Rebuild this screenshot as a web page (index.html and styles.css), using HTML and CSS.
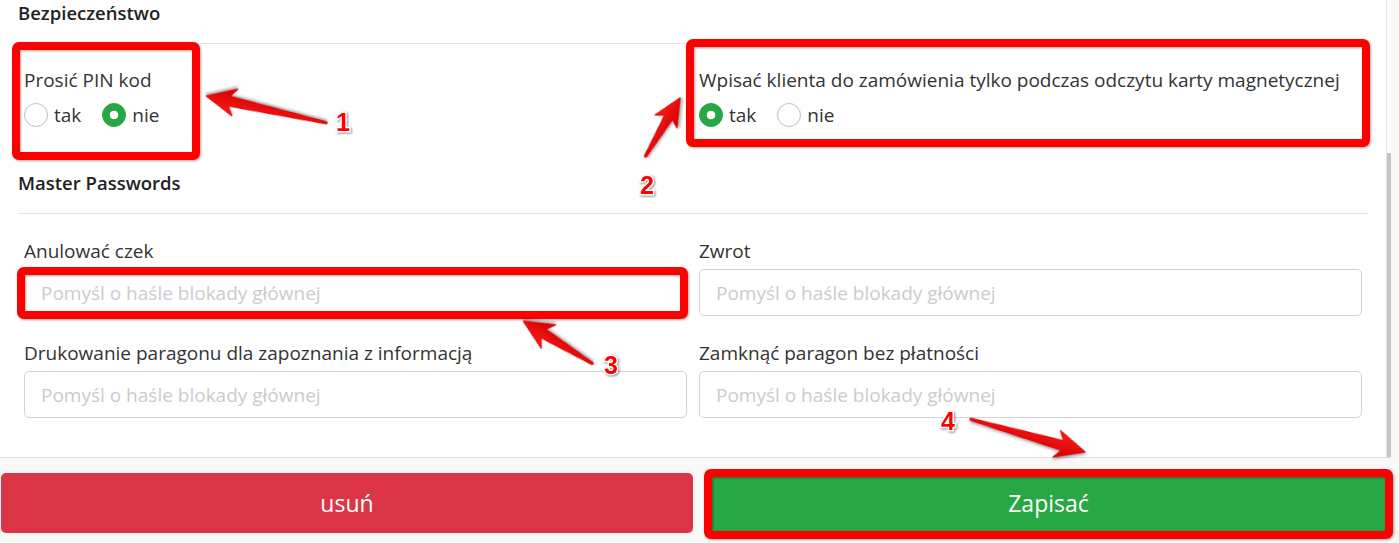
FILE: index.html
```html
<!DOCTYPE html>
<html lang="pl">
<head>
    <meta charset="UTF-8">
    <meta name="viewport" content="width=device-width, initial-scale=1.0">
    <title>Ustawienia - Bezpieczeństwo</title>
    <link rel="stylesheet" href="styles.css">
</head>
<body>
    <div class="page">
        <div class="panel-wrap">
            <div class="panel">
                <section class="group">
                    <h3 class="group-title">Bezpieczeństwo</h3>
                    <div class="row">
                        <div class="col">
                            <div class="field-label">Prosić PIN kod</div>
                            <div class="radios">
                                <label class="radio"><input type="radio" name="pin" value="tak"><span>tak</span></label>
                                <label class="radio"><input type="radio" name="pin" value="nie" checked><span>nie</span></label>
                            </div>
                        </div>
                        <div class="col">
                            <div class="field-label">Wpisać klienta do zamówienia tylko podczas odczytu karty magnetycznej</div>
                            <div class="radios">
                                <label class="radio"><input type="radio" name="card" value="tak" checked><span>tak</span></label>
                                <label class="radio"><input type="radio" name="card" value="nie"><span>nie</span></label>
                            </div>
                        </div>
                    </div>
                </section>

                <section class="group">
                    <h3 class="group-title">Master Passwords</h3>
                    <div class="fields">
                        <div class="field">
                            <label class="field-label" for="cancel">Anulować czek</label>
                            <input type="password" id="cancel" placeholder="Pomyśl o haśle blokady głównej">
                        </div>
                        <div class="field">
                            <label class="field-label" for="refund">Zwrot</label>
                            <input type="password" id="refund" placeholder="Pomyśl o haśle blokady głównej">
                        </div>
                        <div class="field">
                            <label class="field-label" for="info">Drukowanie paragonu dla zapoznania z informacją</label>
                            <input type="password" id="info" placeholder="Pomyśl o haśle blokady głównej">
                        </div>
                        <div class="field">
                            <label class="field-label" for="close">Zamknąć paragon bez płatności</label>
                            <input type="password" id="close" placeholder="Pomyśl o haśle blokady głównej">
                        </div>
                    </div>
                </section>
            </div>
            <div class="scrollbar"><div class="thumb"></div></div>
        </div>

        <div class="actions">
            <button type="button" class="btn btn-danger">usuń</button>
            <button type="submit" class="btn btn-success">Zapisać</button>
        </div>

        <!-- annotations drawn over the screenshot -->
        <svg class="annotations" width="1399" height="543" viewBox="0 0 1399 543">
            <defs>
                <linearGradient id="arrowFill" x1="0" y1="0" x2="0" y2="1">
                    <stop offset="0" stop-color="#ff1a1a"/>
                    <stop offset="1" stop-color="#d00000"/>
                </linearGradient>
            </defs>
            <g class="boxes">
                <rect x="16" y="46" width="180" height="110" rx="3"/>
                <rect x="690" y="43" width="676" height="100" rx="3"/>
                <rect x="21" y="271" width="663" height="44" rx="3"/>
                <rect x="708" y="473" width="681" height="62" rx="3"/>
            </g>
            <g class="arrows">
                <polygon transform="translate(327 123) rotate(192.6)" points="0,-1 100,-5 94,-14 124,0 94,14 100,5 0,1"/>
                <polygon transform="translate(645 157) rotate(-59.3)" points="0,-1 46,-4.5 41,-13 69,0 41,13 46,4.5 0,1"/>
                <polygon transform="translate(593 364) rotate(211.6)" points="0,-1 58,-5 52,-14 82,0 52,14 58,5 0,1"/>
                <polygon transform="translate(970 419) rotate(16)" points="0,-1 96,-5 90,-14 120,0 90,14 96,5 0,1"/>
            </g>
            <g class="marks">
                <text x="343" y="131">1</text>
                <text x="647" y="194">2</text>
                <text x="611" y="374">3</text>
                <text x="948" y="430">4</text>
            </g>
        </svg>
    </div>
</body>
</html>
```

FILE: styles.css
```css
body {
    margin: 0;
    font-family: "Open Sans", "Segoe UI", sans-serif;
    color: #333;
    background-color: #f8f8f8;
}
.page {
    position: relative;
    width: 1399px;
    height: 543px;
}
.panel-wrap {
    display: flex;
    width: 1391px;
    height: 457px;
    background-color: #fff;
    border-bottom: 1px solid #dedede;
}
.panel {
    flex: 1;
    padding: 0 18px;
    border-right: 1px solid #e6e6e6;
    overflow: hidden;
}
.scrollbar {
    width: 4px;
}
.thumb {
    margin-top: 153px;
    height: 304px;
    background-color: #c6c6c6;
}
.group + .group {
    margin-top: 43px;
}
.group-title {
    margin: 0;
    padding-bottom: 17px;
    font-size: 18.5px;
    font-weight: 600;
    line-height: 26px;
    color: #222;
    border-bottom: 1px solid #e5e5e5;
}
.row {
    display: flex;
    padding-top: 24px;
}
.col {
    flex: 1;
    padding: 0 6px;
}
.field-label {
    display: block;
    font-size: 19px;
    line-height: 24px;
}
.radios {
    display: flex;
    gap: 21px;
    margin-top: 11px;
}
.radio {
    display: flex;
    align-items: center;
    gap: 6px;
    font-size: 19px;
    line-height: 24px;
}
.radio input {
    appearance: none;
    -webkit-appearance: none;
    width: 24px;
    height: 24px;
    margin: 0;
    border: 1px solid #b9bfc5;
    border-radius: 50%;
    background-color: #fff;
}
.radio input:checked {
    border-color: #28a745;
    background-color: #28a745;
    background-image: radial-gradient(circle, #fff 0 4px, transparent 4.6px);
}
.fields {
    display: grid;
    grid-template-columns: 1fr 1fr;
    row-gap: 25px;
    padding-top: 25px;
}
.field {
    padding: 0 6px;
}
.field input {
    display: block;
    width: 100%;
    height: 47px;
    margin-top: 6px;
    padding: 0 16px;
    box-sizing: border-box;
    border: 1px solid #ced4da;
    border-radius: 5px;
    font-family: inherit;
    font-size: 19px;
}
.field input::placeholder {
    color: #c9cccf;
}
.actions {
    display: flex;
    width: 1391px;
    padding: 15px 0 0 1px;
    box-sizing: border-box;
}
.btn {
    height: 60px;
    border: none;
    border-radius: 5px;
    color: #fff;
    font-family: inherit;
    font-size: 23px;
    cursor: pointer;
}
.btn-danger {
    flex: 0 0 692px;
    background-color: #dc3545;
}
.btn-success {
    flex: 1;
    margin-left: 13px;
    background-color: #28a745;
}
.annotations {
    position: absolute;
    top: 0;
    left: 0;
    pointer-events: none;
}
.boxes rect {
    fill: none;
    stroke: #ff0000;
    stroke-width: 8;
    filter: drop-shadow(1px 1px 1px rgba(0, 0, 0, 0.35));
}
.arrows polygon {
    fill: url(#arrowFill);
    stroke: #e00000;
    stroke-width: 1;
    stroke-linejoin: round;
    filter: drop-shadow(1px 2px 1px rgba(0, 0, 0, 0.3));
}
.marks text {
    font-family: "Liberation Sans", Arial, sans-serif;
    font-size: 25px;
    font-weight: bold;
    text-anchor: middle;
    fill: #ff0000;
    stroke: #fff;
    stroke-width: 3px;
    paint-order: stroke;
    filter: drop-shadow(1px 1px 1px rgba(0, 0, 0, 0.45));
}
```
